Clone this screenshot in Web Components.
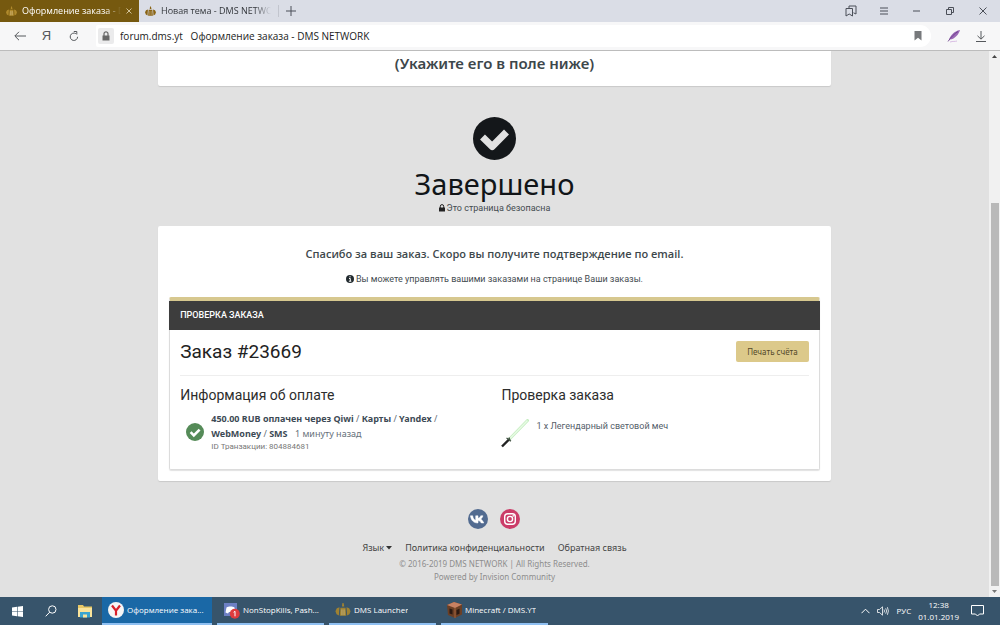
<!DOCTYPE html>
<html lang="ru">
<head>
<meta charset="utf-8">
<title>Оформление заказа - DMS NETWORK</title>
<style>
html, body { height: 100%; margin: 0; }
body {
  display: flex; flex-direction: column; overflow: hidden;
  background: #e1e1e1; color: #3d474b;
  font-family: "Noto Sans", "Open Sans", sans-serif; font-size: 9px;
}
.viewport { flex: 1; min-height: 0; display: flex; }
</style>
</head>
<body>
<tab-strip>
  <browser-tab active>Оформление заказа - D</browser-tab>
  <browser-tab>Новая тема - DMS NETWO</browser-tab>
</tab-strip>
<address-bar></address-bar>
<div class="viewport">
  <checkout-page></checkout-page>
  <scroll-rail></scroll-rail>
</div>
<task-bar></task-bar>

<script>
const define = (name, css, html) => customElements.define(name, class extends HTMLElement {
  constructor() {
    super();
    const t = document.createElement('template');
    t.innerHTML = `<style>
      :host, *, *::before, *::after { box-sizing: border-box; }
      button { font: inherit; color: inherit; background: none; border: 0; padding: 0; margin: 0; display: inline-flex; align-items: center; justify-content: center; }
      a { color: inherit; text-decoration: none; }
      h1, h2, h3, p { margin: 0; }
      svg { display: block; flex: none; }
      ${css}</style>${html}`;
    this.attachShadow({ mode: 'open' }).append(t.content);
  }
});

/* Site mark: three towers over a base */
const mark = `<g fill="currentColor"><path d="M6 0h1l.6 3h-2z"/><path d="M4.3 4h4.4l.6 7H3.7zM1.2 4.6l2.3-.9-.5 7L1 9.6 0 7zM11.8 4.6l-2.3-.9.5 7 2-1.1 1-2.6z"/></g><path d="M5.6 5.5v5M7.4 5.5v5" stroke="#fff" stroke-opacity=".5" stroke-width=".6"/>`;

define('browser-tab', `
  :host { display: flex; align-items: center; gap: 5px; flex: 0 1 139px; min-width: 0; padding: 0 7px 0 6px; color: #33363b; font: 9px/22px "Open Sans", sans-serif; }
  :host([active]) { background: #76590f; color: #fff; }
  svg.mark { color: #8a6414; }
  :host([active]) svg.mark { color: #b08a2c; }
  .name { flex: 1; min-width: 0; overflow: hidden; white-space: nowrap; -webkit-mask-image: linear-gradient(90deg, #000 85%, transparent); mask-image: linear-gradient(90deg, #000 85%, transparent); }
  .close { display: none; }
  :host([active]) .close { display: inline-flex; color: #dccfa9; }
`, `<svg class="mark" width="11" height="11" viewBox="0 0 13 12">${mark}</svg>
<span class="name"><slot></slot></span>
<button class="close" aria-label="Закрыть вкладку"><svg width="6" height="6" viewBox="0 0 6 6"><path d="M.5.5l5 5m0-5l-5 5" stroke="currentColor" stroke-width=".9"/></svg></button>`);

define('tab-strip', `
  :host { display: flex; height: 22px; flex: none; background: #dadde6; color: #4b4f58; }
  .add { width: 24px; border-left: 1px solid #c2c5ce; margin: 5px 0; }
  .controls { margin-left: auto; display: flex; padding-right: 1px; }
  .controls button { width: 33px; }
`, `<slot></slot>
<button class="add" aria-label="Новая вкладка"><svg width="10" height="10" viewBox="0 0 10 10"><path d="M5 0v10M0 5h10" stroke="currentColor"/></svg></button>
<div class="controls">
<button aria-label="Закладки"><svg width="12" height="12" viewBox="0 0 12 12" fill="none" stroke="currentColor"><path d="M4 3V1h7v8l-2.5-1.2"/><path d="M1 3.500h6.500v7.500L4.200 9 1 11z"/></svg></button>
<button aria-label="Меню"><svg width="8" height="8" viewBox="0 0 8 8"><path d="M0 1h8M0 4h8M0 7h8" stroke="currentColor"/></svg></button>
<button aria-label="Свернуть"><svg width="8" height="8" viewBox="0 0 8 8"><path d="M0 4h7" stroke="currentColor"/></svg></button>
<button aria-label="Развернуть"><svg width="8" height="8" viewBox="0 0 8 8" fill="none" stroke="currentColor"><path d="M.5 2.500h5v5h-5zM2.500 2V.5h5v5H6"/></svg></button>
<button aria-label="Закрыть"><svg width="8" height="8" viewBox="0 0 8 8"><path d="M.5.5l7 7m0-7l-7 7" stroke="currentColor"/></svg></button>
</div>`);

define('address-bar', `
  :host { display: flex; align-items: center; height: 29px; flex: none; background: #f7f7f8; border-bottom: 1px solid #bcbcbc; color: #55585c; padding: 0 6px; }
  .nav { width: 27px; height: 20px; }
  .ya { font: 13px/20px "Liberation Sans", sans-serif; }
  .field { flex: 1; display: flex; align-items: center; height: 22px; margin: 0 9px; background: #fff; border-radius: 2px 11px 11px 2px; padding: 0 9px 0 2px; }
  .lock { width: 16px; height: 16px; background: #ebebec; border-radius: 2px; display: flex; align-items: center; justify-content: center; }
  input { flex: 1; min-width: 0; border: 0; outline: 0; background: none; padding: 0 6px; margin: 0; color: #222; font: 10px/20px "Open Sans", sans-serif; }
`, `<button class="nav" aria-label="Назад"><svg width="12" height="10" viewBox="0 0 12 10"><path d="M12 5H1M5 .8L.8 5 5 9.200" fill="none" stroke="currentColor"/></svg></button>
<button class="nav ya" aria-label="Яндекс">Я</button>
<button class="nav" aria-label="Обновить"><svg width="10" height="11" viewBox="0 0 10 11"><path d="M8.600 5.800A3.700 3.700 0 1 1 6.800 2.600M4.800.5h3v3" fill="none" stroke="currentColor"/></svg></button>
<div class="field"><span class="lock"><svg width="8" height="10" viewBox="0 0 8 10"><path d="M.5 4.500h7V9.500h-7z" fill="#666"/><path d="M2 5V2.800a2 2 0 0 1 4 0V5" fill="none" stroke="#666" stroke-width="1.200"/></svg></span>
<input aria-label="Адрес" value="forum.dms.yt   Оформление заказа - DMS NETWORK">
<button aria-label="В закладки"><svg width="8" height="10" viewBox="0 0 8 10"><path d="M.5 0h7v9.500L4 6.800.5 9.500z" fill="#77797c"/></svg></button></div>
<button class="nav" aria-label="Турбо"><svg width="14" height="14" viewBox="0 0 14 14"><path d="M1.500 12C3 7 7 2 13 1c-1 4-5 9-10 9.600z" fill="#9a68b5"/><path d="M1 12.500C4 8 7 5 11 2.500" stroke="#5e3380" fill="none" stroke-width=".7"/><path d="M3 13c3-1 5-.2 7-1" stroke="#d9bde4" fill="none"/></svg></button>
<button class="nav" aria-label="Загрузки"><svg width="10" height="11" viewBox="0 0 10 11"><path d="M5 0v8M1.500 4.800L5 8.200l3.500-3.400M0 10.500h10" fill="none" stroke="currentColor"/></svg></button>`);

define('scroll-rail', `
  :host { display: flex; flex-direction: column; align-items: center; flex: 0 0 11px; background: #f1f1f1; padding: 4px 0; }
  .gap { flex: 141; }
  .thumb { flex: 382; width: 8px; background: #b9b9b9; margin-bottom: 4px; }
  .up { margin-bottom: 4px; }
`, `<svg class="up" width="5" height="3" viewBox="0 0 5 3"><path d="M0 3L2.500 0 5 3z" fill="#444"/></svg>
<span class="gap"></span><span class="thumb"></span>
<svg width="5" height="3" viewBox="0 0 5 3"><path d="M0 0l2.500 3L5 0z" fill="#777"/></svg>`);

/* White rounded panel */
define('site-card', `
  :host { display: block; background: #fff; border-radius: 2px; box-shadow: 0 1px 1px #c9c9c9; }
`, `<slot></slot>`);

define('payment-entry', `
  :host { display: flex; align-items: center; gap: 7px; padding-left: 6px; }
  .text { flex: 1; padding-right: 24px; font-size: 9px; line-height: 15px; color: #66707a; }
  ::slotted(b) { color: #3d4a55; }
  .ago { margin-left: 5px; }
  .id { font: 8px/11px Roboto, sans-serif; color: #777; }
`, `<svg width="18" height="18" viewBox="0 0 18 18"><circle cx="9" cy="9" r="9" fill="#558b58"/><path d="M4.600 9.200l3.200 3.200 5.800-5.800" fill="none" stroke="#fff" stroke-width="2.600"/></svg>
<div class="text"><slot></slot> <span class="ago"><slot name="time"></slot></span><p class="id"><slot name="id"></slot></p></div>`);

define('order-item', `
  :host { display: flex; gap: 7px; padding-top: 8px; font: 9px/15px Roboto, sans-serif; color: #55606a; }
`, `<svg width="28" height="29" viewBox="0 0 28 29"><path d="M8 20.500L26.500 1.500" stroke="#c5ecc0" stroke-width="3" stroke-linecap="round"/><path d="M8 20.500L26.500 1.500" stroke="#e7fbe4" stroke-width="1.500"/><path d="M1 27.500l7-7" stroke="#222" stroke-width="2.400"/><path d="M5.500 19l4.500 3M8 18.500l1.500 4" stroke="#3f5141" stroke-width="1.200"/></svg>
<span><slot></slot></span>`);

define('order-summary', `
  :host { display: block; border: 1px solid #dcdcdc; border-top: 4px solid #d7c88f; border-radius: 2px; box-shadow: 0 1px 1px #e2e2e2; }
  .head { background: #3d3d3d; color: #fff; margin: 0 -1px; padding: 0 11px; font: 500 9px/29px Roboto, sans-serif; text-transform: uppercase; }
  .body { padding: 11px 10px 17px; }
  .title { display: flex; align-items: center; justify-content: space-between; padding-bottom: 13px; border-bottom: 1px solid #eee; }
  .order { font: 400 19px/21px Roboto, sans-serif; color: #222; }
  .print { height: 21px; padding: 0 11px; border-radius: 2px; background: #dcc98a; color: #54492b; font-size: 8px; }
  .cols { display: grid; grid-template-columns: 1fr 1fr; gap: 14px; padding-top: 10px; }
  h3 { font: 400 14px/18px Roboto, sans-serif; color: #2d2d2d; margin-bottom: 7px; }
`, `<h2 class="head">Проверка заказа</h2>
<div class="body">
<div class="title"><h2 class="order">Заказ #23669</h2><button class="print">Печать счёта</button></div>
<div class="cols">
<section><h3>Информация об оплате</h3><payment-entry><b>450.00 RUB оплачен через Qiwi</b> / <b>Карты</b> / <b>Yandex</b> / <b>WebMoney</b> / <b>SMS</b><span slot="time">1 минуту назад</span><span slot="id">ID Транзакции: 804884681</span></payment-entry></section>
<section><h3>Проверка заказа</h3><order-item>1 x Легендарный световой меч</order-item></section>
</div></div>`);

define('page-footer', `
  :host { display: flex; flex-direction: column; align-items: center; color: #8d8d8d; font-size: 8px; line-height: 13px; }
  .social { display: flex; gap: 12px; margin-bottom: 11px; }
  nav { display: flex; gap: 13px; font-size: 9px; line-height: 16px; color: #444; margin-bottom: 1px; }
  nav button { gap: 2px; }
`, `<div class="social">
<a href="#" aria-label="ВКонтакте"><svg width="20" height="20" viewBox="0 0 20 20"><circle cx="10" cy="10" r="10" fill="#526b90"/><path d="M9.800 14C5.500 14 3 11.200 2.400 6.800h2.300c.3 2.700 1.500 4 3 4.500V6.800h2.300v2.500c1.200-.3 2.200-1.200 2.700-2.500h2.300c-.4 1.500-1.400 2.600-2.300 3.300 1.100.6 2.200 1.800 3.100 3.900h-2.500c-.7-1.400-1.800-2.200-3.300-2.400V14z" fill="#fff" stroke="#fff" stroke-width=".5"/></svg></a>
<a href="#" aria-label="Instagram"><svg width="20" height="20" viewBox="0 0 20 20"><circle cx="10" cy="10" r="10" fill="#cb3c68"/><rect x="4.700" y="4.700" width="10.600" height="10.600" rx="3" fill="none" stroke="#fff" stroke-width="1.400"/><circle cx="10" cy="10" r="2.600" fill="none" stroke="#fff" stroke-width="1.400"/><circle cx="13.200" cy="6.900" r=".8" fill="#fff"/></svg></a></div>
<nav><button>Язык <svg width="6" height="4" viewBox="0 0 6 4"><path d="M0 0h6L3 3.500z" fill="#333"/></svg></button><a href="#">Политика конфиденциальности</a><a href="#">Обратная связь</a></nav>
<p>© 2016-2019 DMS NETWORK | All Rights Reserved.</p>
<a href="#">Powered by Invision Community</a>`);

define('checkout-page', `
  :host { flex: 1; min-width: 0; overflow: hidden; display: flex; flex-direction: column; align-items: center; }
  main { width: 68%; text-align: center; }
  .note { padding-bottom: 11px; font-size: 15px; line-height: 24px; font-weight: 600; border-radius: 0 0 2px 2px; }
  .done { display: flex; flex-direction: column; align-items: center; padding: 31px 0 12px; color: #111518; }
  h1 { margin-top: 6px; font-size: 29px; line-height: 36px; font-weight: 400; }
  .line { display: flex; align-items: center; justify-content: center; gap: 2px; font-family: Roboto, sans-serif; font-size: 9px; color: #444c50; }
  .secure { line-height: 12px; }
  .main { padding: 19px 11px 11px; }
  .thanks { font: 600 11px/18px "Open Sans", sans-serif; margin-bottom: 9px; }
  .manage { line-height: 14px; margin-bottom: 11px; }
  order-summary { text-align: left; }
  page-footer { margin-top: 28px; }
`, `<main>
<site-card class="note">(Укажите его в поле ниже)</site-card>
<div class="done">
<svg width="43" height="43" viewBox="0 0 43 43"><circle cx="21.500" cy="21.500" r="21.500" fill="#14171a"/><path d="M9.500 20l9.700 9.500L33.500 15" fill="none" stroke="#e1e1e1" stroke-width="7" stroke-linejoin="round"/></svg>
<h1>Завершено</h1>
<p class="line secure"><svg width="6" height="8" viewBox="0 0 6 8"><path d="M0 3.500h6V7.500H0z" fill="#222"/><path d="M1.300 4V2.300a1.700 1.700 0 0 1 3.400 0V4" fill="none" stroke="#222"/></svg>Это страница безопасна</p>
</div>
<site-card class="main">
<p class="thanks">Спасибо за ваш заказ. Скоро вы получите подтверждение по email.</p>
<p class="line manage"><svg width="8" height="8" viewBox="0 0 8 8"><circle cx="4" cy="4" r="4" fill="#222b2f"/><path d="M4 1.200v1.200M3 3.500h1.300v2.700M2.900 6.200h2.400" stroke="#fff" fill="none"/></svg>Вы можете управлять вашими заказами на странице Ваши заказы.</p>
<order-summary></order-summary>
</site-card>
<page-footer></page-footer>
</main>`);

define('task-item', `
  :host { display: flex; flex: 0 1 107px; min-width: 0; border-bottom: 2px solid #8fc0f2; }
  :host([active]) { background: #1a68a6; flex-basis: 110px; }
  button { flex: 1; min-width: 0; justify-content: flex-start; gap: 3px; padding: 0 2px 0 6px; }
  .name { white-space: nowrap; overflow: hidden; text-overflow: ellipsis; }
  ::slotted(svg) { display: block; flex: none; }
`, `<button><slot name="icon"></slot><span class="name"><slot></slot></span></button>`);

define('task-bar', `
  :host { display: flex; height: 28px; flex: none; background: #37546b; color: #fff; font: 8px/12px "Open Sans", sans-serif; }
  .sys { width: 34px; }
  .tasks { flex: 1; min-width: 0; display: flex; gap: 5px; }
  .tray { display: flex; align-items: center; gap: 7px; padding-right: 16px; }
  .clock { text-align: center; }
  .note { margin-left: 5px; }
`, `<button class="sys" aria-label="Пуск"><svg width="11" height="11" viewBox="0 0 11 11"><path d="M0 1.500L5 .8v4.400H0zM5.600.7L11 0v5.200H5.600zM0 5.800h5v4.400l-5-.7zM5.600 5.800H11V11l-5.400-.7z" fill="#fff"/></svg></button>
<button class="sys" aria-label="Поиск"><svg width="12" height="12" viewBox="0 0 12 12" fill="none" stroke="#fff"><circle cx="7.300" cy="4.500" r="3.700"/><path d="M4.700 7.200L.7 11.300"/></svg></button>
<button class="sys" aria-label="Проводник"><svg width="16" height="14" viewBox="0 0 16 14"><path d="M1 1h5l1 1.500h8V13H1z" fill="#e8c765"/><path d="M1 4h14v9H1z" fill="#fae39a"/><path d="M3 8h10v5.500H3z" fill="#3ba5d0"/><path d="M6 10.500h4v3H6z" fill="#fae39a"/></svg></button>
<div class="tasks">
<task-item active><svg slot="icon" width="16" height="16" viewBox="0 0 16 16"><circle cx="8" cy="8" r="8" fill="#f5f5f5"/><path d="M4 3.500l4 5.200 4-5.200M8 8v5.500" fill="none" stroke="#d8202a" stroke-width="2.200"/></svg>Оформление зака...</task-item>
<task-item><svg slot="icon" width="17" height="17" viewBox="0 0 17 17"><path d="M1 1h13v13H1z" fill="#6d80c4"/><path d="M3.500 5.500c2-1.200 6-1.200 8 0l1 5-2.500 1-1-1.500H6L5 11.500l-2.500-1z" fill="#fff"/><circle cx="11.800" cy="11.800" r="5" fill="#de3c3e"/><path d="M10.600 10.300l1.400-1v5" fill="none" stroke="#fff"/></svg>NonStopKills, Pash...</task-item>
<task-item><svg slot="icon" width="16" height="14" viewBox="0 0 13 12" color="#a08231">${mark}</svg>DMS Launcher</task-item>
<task-item><svg slot="icon" width="15" height="16" viewBox="0 0 15 16"><path d="M0 3l7-3 8 2.500v10L8 16 1 13z" fill="#6b3f25"/><path d="M0 3l7-3 8 2.500L8 6z" fill="#c98162"/><path d="M2.500 6.500l3 1v5l-3-1zM9.500 8l3-1.200v5l-3 1.200z" fill="#2c1a12"/><path d="M8 6v10" stroke="#a5653c"/></svg>Minecraft / DMS.YT</task-item>
</div>
<div class="tray">
<svg width="9" height="6" viewBox="0 0 9 6"><path d="M.5 5.200l4-4 4 4" fill="none" stroke="#fff"/></svg>
<svg width="12" height="10" viewBox="0 0 12 10" fill="none" stroke="#fff" stroke-width=".8"><path d="M.5 3.500h2L5.500.8v8.400L2.500 6.500h-2zM7 3.500q1 1.500 0 3M8.700 2.300q1.800 2.700 0 5.400M10.400 1.200q2 3.800 0 7.600"/></svg>
<span>РУС</span><span class="clock">12:38<br>01.01.2019</span>
<svg class="note" width="13" height="12" viewBox="0 0 13 12"><path d="M.5.5h12v8.500H8.500L6.500 11l-2-2h-4z" fill="none" stroke="#fff"/></svg>
</div>`);
</script>
</body>
</html>
